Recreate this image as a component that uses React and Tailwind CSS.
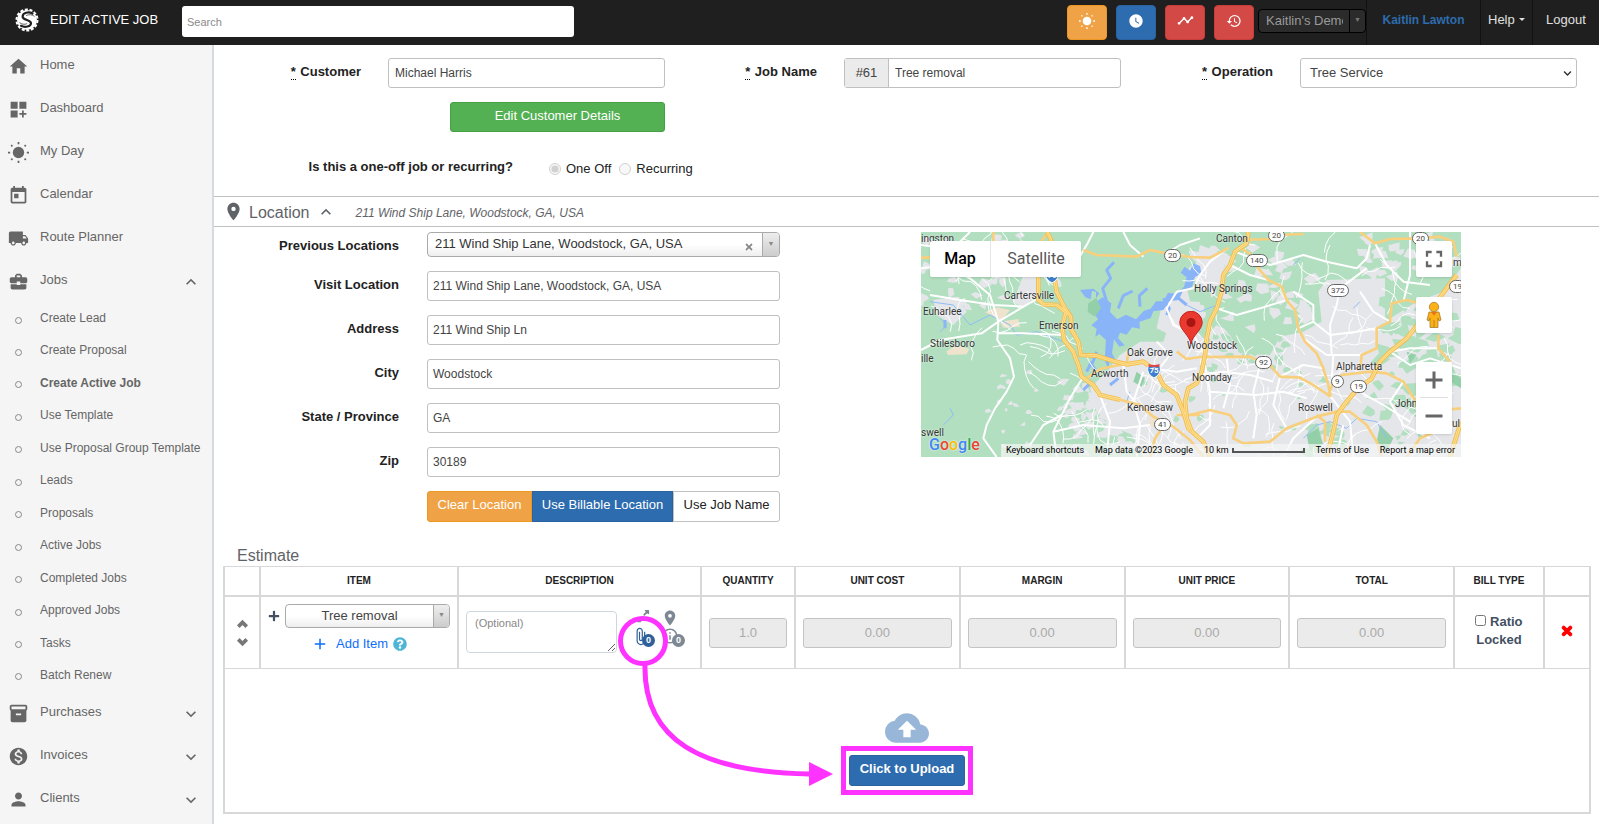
import React from 'react';
import {
  MdHome,
  MdDashboardCustomize,
  MdToday,
  MdLocalShipping,
  MdBusinessCenter,
  MdInventory2,
  MdMonetizationOn,
  MdPerson,
  MdExpandLess,
  MdExpandMore,
  MdPlace,
  MdBackup,
  MdTimeline,
  MdHistory,
  MdWatchLater,
  MdOutlineInfo,
  MdAttachFile,
  MdAdd,
  MdFullscreen
} from 'react-icons/md';
import { FaPlus, FaChevronDown, FaExpandAlt, FaTimes, FaQuestionCircle } from 'react-icons/fa';
import { Plus, Minus, ChevronUp, ChevronDown } from 'lucide-react';

const SunIcon = ({ size }) => (
  <svg width={size} height={size} viewBox="0 0 24 24" fill="currentColor" stroke="currentColor" aria-hidden="true">
    <circle cx="12" cy="12" r="6.500" stroke="none" />
    <g strokeWidth="2">
      <path d="M12 0v2.500M12 21.500v2.500M0 12h2.500M21.500 12h2.500M3.600 3.600l1.500 1.500M18.900 18.900l1.500 1.500M3.600 20.400l1.500-1.500M18.900 5.100l1.500-1.500" />
    </g>
  </svg>
);

const NAV_TOP = [
  { label: 'Home', icon: MdHome },
  { label: 'Dashboard', icon: MdDashboardCustomize },
  { label: 'My Day', icon: SunIcon },
  { label: 'Calendar', icon: MdToday },
  { label: 'Route Planner', icon: MdLocalShipping },
  { label: 'Jobs', icon: MdBusinessCenter, arrow: MdExpandLess }
];

const JOB_LINKS = [
  'Create Lead',
  'Create Proposal',
  'Create Active Job',
  'Use Template',
  'Use Proposal Group Template',
  'Leads',
  'Proposals',
  'Active Jobs',
  'Completed Jobs',
  'Approved Jobs',
  'Tasks',
  'Batch Renew'
];

const NAV_BOTTOM = [
  { label: 'Purchases', icon: MdInventory2, arrow: MdExpandMore },
  { label: 'Invoices', icon: MdMonetizationOn, arrow: MdExpandMore },
  { label: 'Clients', icon: MdPerson, arrow: MdExpandMore }
];

const LOCATION_FIELDS = [
  { id: 'visit', label: 'Visit Location', value: '211 Wind Ship Lane, Woodstock, GA, USA' },
  { id: 'address', label: 'Address', value: '211 Wind Ship Ln' },
  { id: 'city', label: 'City', value: 'Woodstock' },
  { id: 'state', label: 'State / Province', value: 'GA' },
  { id: 'zip', label: 'Zip', value: '30189' }
];

const Logo = () => (
  <svg width="24" height="24" viewBox="0 0 24 24" aria-hidden="true">
    <circle cx="12" cy="12" r="10" fill="#fff" />
    <circle cx="12" cy="12" r="10.500" fill="none" stroke="#fff" strokeWidth="2" strokeDasharray="3 1.700" />
    <path
      d="M17.500 5.500C14 3.200 7.500 4.600 7.600 8.600c.1 3.600 8.600 3.200 8.400 6.600-.2 3.400-6 4.600-10 2.600"
      fill="none"
      stroke="#1f1f1f"
      strokeWidth="2.200"
      strokeLinecap="round"
    />
    <path d="M19.500 8.500c-2-2-6.500-2.400-8.600-.6M4.600 14.600c1.600 1.600 5.200 2.300 7.600 1" fill="none" stroke="#1f1f1f" strokeWidth=".7" />
  </svg>
);

const Header = () => (
  <header className="flex h-[45px] items-center bg-[#1f1f1f] text-[#e0e0e0]">
    <div className="flex w-[182px] shrink-0 items-center gap-[11px] pb-1.5 pl-[15px]">
      <Logo />
      <h1 className="text-[13px] whitespace-nowrap text-white">EDIT ACTIVE JOB</h1>
    </div>
    <input
      type="text"
      aria-label="Search"
      placeholder="Search"
      className="mb-0.5 h-[31px] w-[392px] rounded-[3px] bg-white px-[5px] text-[11px] text-gray-700 placeholder:text-[#8a8a8a]"
    />
    <div className="ml-auto flex shrink-0 items-center gap-[9px] pr-1 text-white">
      <button aria-label="My day" className="flex h-[35px] w-10 items-center justify-center rounded border border-[#ec971f] bg-[#f0a346] pb-1">
        <SunIcon size={16} />
      </button>
      <button aria-label="Time" className="flex h-[35px] w-10 items-center justify-center rounded border border-[#2a63a0] bg-[#2d6cae] pb-1">
        <MdWatchLater size={16} />
      </button>
      <button aria-label="Activity" className="flex h-[35px] w-10 items-center justify-center rounded border border-[#c93c38] bg-[#d34945] pb-1">
        <MdTimeline size={17} />
      </button>
      <button aria-label="History" className="flex h-[35px] w-10 items-center justify-center rounded border border-[#c93c38] bg-[#d34945] pb-1">
        <MdHistory size={16} />
      </button>
    </div>
    <div className="mb-1 flex h-6 w-[108px] shrink-0 rounded border border-black bg-[#2b2b2b]">
      <select aria-label="Company" className="min-w-0 flex-1 appearance-none overflow-hidden pr-1.5 pl-[7px] text-[13px] text-[#9a9a9a]">
        <option>Kaitlin&apos;s Demo</option>
      </select>
      <span className="flex w-4 items-center justify-center border-l border-black text-[7px] text-[#777]">▼</span>
    </div>
    <nav className="flex h-full shrink-0 items-stretch text-[13px]">
      <a href="#account" className="flex w-[114px] items-center justify-center border-l border-[#111] pb-1.5 text-[12px] font-bold text-[#2d6cae]">
        Kaitlin Lawton
      </a>
      <a href="#help" className="flex w-[52px] items-center gap-1 border-l border-[#111] pb-1.5 pl-[7px]">
        Help
        <span className="border-x-3 border-t-3 border-x-transparent border-t-[#e0e0e0]" />
      </a>
      <a href="#logout" className="flex w-[67px] items-center justify-center border-l border-[#111] pb-1.5">
        Logout
      </a>
    </nav>
  </header>
);

const NavItem = ({ label, icon: Icon, arrow: Arrow }) => (
  <li>
    <a href={`#${label}`} className="flex h-[43px] items-center pr-[11px]">
      <span className="flex w-10 items-center pl-2">
        <Icon size={21} />
      </span>
      <span className="flex-1 pb-1">{label}</span>
      {Arrow && <Arrow size={20} />}
    </a>
  </li>
);

const Sidebar = () => (
  <aside className="w-[214px] shrink-0 border-r-2 border-[#d5dbe0] bg-[#f5f5f5] text-[13px] text-[#666]">
    <ul>
      {NAV_TOP.map((item) => (
        <NavItem key={item.label} {...item} />
      ))}
    </ul>
    <ul className="flex min-h-[389px] flex-col justify-between">
      {JOB_LINKS.map((label) => (
        <li key={label}>
          <a href={`#${label}`} className="flex h-8 items-center whitespace-nowrap">
            <span className="w-10 shrink-0 pt-0.5 pl-[15px]">
              <span className="block size-[7px] rounded-full border border-[#888]" />
            </span>
            <span className={label === 'Create Active Job' ? 'pb-0.5 text-[12px] font-bold' : 'pb-0.5 text-[12px]'}>{label}</span>
          </a>
        </li>
      ))}
    </ul>
    <ul>
      {NAV_BOTTOM.map((item) => (
        <NavItem key={item.label} {...item} />
      ))}
    </ul>
  </aside>
);

const Required = () => (
  <abbr title="required" className="mr-px border-b border-dotted border-black no-underline">
    *
  </abbr>
);

const JobDetails = () => (
  <section className="grid grid-cols-3 pt-[13px] pr-[9px] pb-4 pl-2 text-[13px] text-[#222]">
    <div className="pr-[13px]">
      <div className="flex items-center gap-[27px]">
        <label htmlFor="customer" className="w-[139px] pb-0.5 text-right text-[13px] font-bold">
          <Required /> Customer
        </label>
        <input
          id="customer"
          defaultValue="Michael Harris"
          className="h-[30px] min-w-0 flex-1 rounded-[3px] border border-[#c0c0c0] px-1.5 text-[12px] text-[#444]"
        />
      </div>
      <button className="mt-3.5 ml-auto block h-[30px] w-[215px] rounded-[3px] border border-[#46a046] bg-[#53b053] pb-0.5 text-white">
        Edit Customer Details
      </button>
      <fieldset className="mt-[21px] flex items-center">
        <legend className="float-left w-[291px] text-right font-bold">Is this a one-off job or recurring?</legend>
        <div className="flex h-[27px] flex-1 items-center gap-2 pt-1 pl-9">
          <label className="flex items-center gap-[5px] whitespace-nowrap">
            <input type="radio" name="kind" defaultChecked disabled className="size-3" />
            One Off
          </label>
          <label className="flex items-center gap-[5px] whitespace-nowrap">
            <input type="radio" name="kind" disabled className="size-3" />
            Recurring
          </label>
        </div>
      </fieldset>
    </div>
    <div className="pr-[13px]">
      <div className="flex items-center gap-[27px]">
        <label htmlFor="job" className="w-[139px] pb-0.5 text-right text-[13px] font-bold">
          <Required /> Job Name
        </label>
        <div className="flex h-[30px] min-w-0 flex-1 rounded-[3px] border border-[#c0c0c0]">
          <span className="flex w-11 items-center justify-center border-r border-[#c0c0c0] bg-[#ebebeb] text-[#444]">#61</span>
          <input id="job" defaultValue="Tree removal" className="min-w-0 flex-1 px-1.5 text-[12px] text-[#444]" />
        </div>
      </div>
    </div>
    <div className="pr-[13px]">
      <div className="flex items-center gap-[27px]">
        <label htmlFor="operation" className="w-[139px] pb-0.5 text-right text-[13px] font-bold">
          <Required /> Operation
        </label>
        <div className="grid h-[30px] min-w-0 flex-1 grid-cols-[1fr_auto] items-center rounded-[3px] border border-[#c0c0c0] pr-1">
          <select id="operation" className="h-full appearance-none pl-[9px] text-[#444]">
            <option>Tree Service</option>
          </select>
          <FaChevronDown size={9} color="#333" />
        </div>
      </div>
    </div>
  </section>
);

// Map artwork is drawn at three units per screen pixel
const HIGHWAYS = [
  'M410 21Q440 60 432 150L440 200 462 245 482 275 485 315 505 350 512 390 560 392 610 408 650 418 700 410 740 440 760 480 800 510 820 560 835 610 880 650 900 696',
  'M385 150V225L402 238 440 240 468 262 456 305 462 345 490 380 505 420 515 455 552 482 570 510 630 524',
  'M1015 21L1010 55 975 80 960 120 940 150 935 200 920 250 900 290 890 340 885 390 875 440 860 475 835 490 825 530 830 580 845 620',
  'M1640 150L1580 230 1530 290 1490 340 1440 380 1410 410 1385 460 1340 495 1310 530 1280 570 1270 620 1250 696',
  'M1620 696L1653 590'
];

const MAIN_ROADS = [
  'M33 98H60M250 21V60M415 21L385 60V150',
  'M520 75L560 90 680 95 720 75 770 85 840 96 900 98 935 80 955 68',
  'M1000 45L1080 42 1100 30 1180 27',
  'M995 70L1025 90 1045 130 1075 165 1115 185 1130 225 1155 255 1165 310 1185 350 1220 385 1240 430 1255 480 1262 515',
  'M800 380L830 402 870 396 1020 395 1080 420 1110 455 1170 458 1210 480 1262 515',
  'M1350 21L1395 55 1440 42 1530 40 1590 35 1630 50 1640 95',
  'M1530 235L1490 225 1445 235 1440 290 1400 310 1400 370 1355 390 1350 435',
  'M1255 510L1270 470 1295 450 1380 440 1430 445 1480 470 1505 510 1540 560 1653 550',
  'M840 570L900 555 960 570 980 600 970 640 1000 655 1080 650 1130 610 1220 575 1280 560 1320 560 1370 600 1400 650 1415 696',
  'M1220 570L1245 590 1245 650M1585 330V370L1620 410',
  'M530 460L570 432 650 415 655 385',
  'M630 524L690 540 730 575 790 605 840 645 880 696M870 570H800M770 590L735 640 720 696',
  'M1490 696L1530 640 1600 610'
];

const MINOR_ROADS = [
  'M33 375L90 345 215 325 265 290 340 245 385 220M265 290L262 345 300 400 312 455 290 500 255 550 230 600 220 640 260 696',
  'M33 130L110 120 180 160 240 210 265 290M60 210L150 225 250 240 340 245M110 120L140 60 180 21M33 60L150 75 220 100',
  'M265 325L340 325 460 330M520 455L480 520 455 570 430 620 440 696M455 570L400 600 360 660M430 620L520 600 640 610 720 600',
  'M850 190L800 200 770 250 790 300 850 330 885 390M550 21L530 60 500 110M640 21L660 60 700 95M770 85L810 60 870 40',
  'M955 68L900 110 870 150 850 190M960 120L1020 150 1075 165M920 250L980 270 1050 250 1130 225M1165 310L1210 290 1210 240 1150 200',
  'M975 80L1080 120 1180 90 1250 110 1340 130 1370 100 1380 60M1280 696L1300 600M1265 390L1260 300 1280 240 1290 190 1370 130',
  'M1500 21L1500 150 1480 230M1395 55L1430 120 1480 170 1560 180M1350 200L1390 260 1440 290M1210 290L1260 330 1340 320 1400 310',
  'M885 420L900 500 900 600 860 640M950 400L960 480 940 550M1050 420L1030 500 1040 570 1030 640M900 500L1040 510 1120 500 1190 520',
  'M1110 455L1090 540 1130 610M1240 430L1180 420 1110 455M1262 515L1320 590 1330 696M1120 696L1150 640 1220 575',
  'M860 450L940 440 1020 450 1090 470M1480 470L1440 530 1480 600 1560 640M1340 495L1420 540 1500 590M1440 380L1500 420 1560 400 1653 430',
  'M640 420L650 500 700 560M700 440L670 530 690 600 680 696M570 510L600 590 590 696M720 430L800 440 860 430M740 350L780 390 740 440',
  'M1270 390L1265 470M1180 340L1250 390 1350 390M1585 370L1500 370 1440 380'
];

const RIVERS = [
  'M60 230L130 240 180 300 240 270 300 300 320 330 380 320 460 350',
  'M90 280L110 300 90 320M100 600L130 570 120 550M830 240L870 260 920 240',
  'M1180 640L1220 600 1260 590 1310 610 1340 580 1400 590 1430 640M1480 410L1510 420',
  'M660 500L650 530M1150 120L1170 100M1330 250L1350 230'
];

const randomizer = (seed) => {
  let s = seed;
  return () => {
    s = (s * 16807) % 2147483647;
    return s / 2147483647;
  };
};

// Small land parcels spread over the given box
const parcels = (seed, count, x, y, w, h, size) => {
  const next = randomizer(seed);
  return Array.from({ length: count }, () => {
    const px = x + next() * w;
    const py = y + next() * h;
    const corners = [0, 1, 2, 3, 4].map((i) => {
      const r = size * (0.3 + next() * 0.9);
      const a = (i / 5) * Math.PI * 2 + next() * 0.7;
      return `${Math.round(px + Math.cos(a) * r)},${Math.round(py + Math.sin(a) * r * 0.8)}`;
    });
    return corners.join(' ');
  });
};

// Winding local streets spread over the given box
const streets = (seed, count, x, y, w, h) => {
  const next = randomizer(seed);
  return Array.from({ length: count }, () => {
    let px = x + next() * w;
    let py = y + next() * h;
    let a = next() * Math.PI * 2;
    let d = `M${Math.round(px)} ${Math.round(py)}`;
    for (let i = 0; i < 5; i += 1) {
      a += (next() - 0.5) * 1.4;
      px += Math.cos(a) * 22;
      py += Math.sin(a) * 22;
      d += `L${Math.round(px)} ${Math.round(py)}`;
    }
    return d;
  });
};

const GREY_PARCELS = [
  ...parcels(1117, 60, 450, 470, 250, 220, 20),
  ...parcels(2903, 32, 33, 21, 450, 230, 19),
  ...parcels(4129, 50, 840, 60, 370, 260, 24),
  ...parcels(5303, 20, 220, 400, 260, 290, 12),
  ...parcels(6701, 30, 1340, 30, 300, 130, 22)
];

const GREEN_PARCELS = [
  ...parcels(1709, 46, 1420, 170, 230, 260, 30),
  ...parcels(7307, 30, 880, 330, 260, 110, 16),
  ...parcels(8311, 26, 700, 440, 950, 250, 13),
  ...parcels(9719, 22, 1380, 400, 260, 180, 26),
  ...parcels(10103, 12, 1180, 600, 130, 90, 24)
];

const STREETS = [
  ...streets(3301, 55, 850, 380, 780, 300),
  ...streets(4507, 45, 870, 60, 780, 330),
  ...streets(5701, 40, 440, 440, 420, 240),
  ...streets(6907, 30, 40, 30, 420, 400)
];

const MAP_LABELS = [
  { text: 'ingston', x: 0, y: 0 },
  { text: 'Cartersville', x: 83, y: 57 },
  { text: 'Euharlee', x: 2, y: 73 },
  { text: 'Emerson', x: 118, y: 87 },
  { text: 'Stilesboro', x: 9, y: 105 },
  { text: 'ille', x: 0, y: 120 },
  { text: 'Oak Grove', x: 206, y: 114 },
  { text: 'Acworth', x: 170, y: 135 },
  { text: 'Kennesaw', x: 206, y: 169 },
  { text: 'swell', x: 0, y: 194 },
  { text: 'Canton', x: 295, y: 0 },
  { text: 'Holly Springs', x: 273, y: 50 },
  { text: 'Woodstock', x: 266, y: 107 },
  { text: 'Noonday', x: 271, y: 139 },
  { text: 'Alpharetta', x: 415, y: 128 },
  { text: 'Roswell', x: 377, y: 169 },
  { text: 'Johns Creek', x: 474, y: 165 },
  { text: 'm', x: 532, y: 24 },
  { text: 'ul', x: 531, y: 185 }
];

const ROUTE_SHIELDS = [
  { text: '20', x: 243, y: 17 },
  { text: '20', x: 347, y: -3 },
  { text: '20', x: 491, y: 0 },
  { text: '140', x: 325, y: 22 },
  { text: '372', x: 406, y: 52 },
  { text: '92', x: 334, y: 124 },
  { text: '9', x: 410, y: 143 },
  { text: '19', x: 429, y: 148 },
  { text: '41', x: 233, y: 186 },
  { text: '19', x: 528, y: 48 }
];

const MapArt = () => (
  <svg className="absolute inset-0 size-full" viewBox="33 21 1620 675" preserveAspectRatio="xMidYMid slice" aria-hidden="true">
    <rect x="33" y="21" width="1620" height="675" fill="#e5e6ea" />
    <path
      fill="#b2dfc0"
      d="M33 21H1653V130L1600 200 1520 230 1425 290V160L1250 165 1225 200 1235 290 1180 320 1110 335 1080 390 990 385 960 330 920 300 880 340 840 300 810 250 780 290 760 350 690 350 630 390 590 440 540 490 560 560 620 610 690 640 720 696H33Z"
    />
    <path fill="#e5e6ea" d="M330 40L385 90 390 200 340 250 310 230 340 150ZM70 225L140 215 170 260 130 300 80 270ZM870 60L950 90 930 180 870 200 850 150ZM760 220L830 190 860 300 800 340 740 310ZM590 440L700 430 760 520 820 600 850 696H700L660 620 600 560Z" />
    {GREY_PARCELS.map((points) => (
      <polygon key={points} points={points} fill="#e5e6ea" />
    ))}
    {GREEN_PARCELS.map((points) => (
      <polygon key={points} points={points} fill="#b2dfc0" />
    ))}
    <path fill="#93cfa9" d="M680 440l25 20-10 25-25-15ZM1190 630l35-20 15 50-40 20ZM1410 600l40 40-20 40-30-30ZM1490 380l30 10-20 25ZM1620 440l33 20v30l-30-20Z" />
    <path fill="#efe3cd" d="M225 262L260 247 300 255 275 285ZM270 290L325 282 330 305 280 308ZM108 380L140 360 178 372 170 388 115 390ZM720 575l30 5-5 30-28-8Z" />
    <path
      fill="#8ab4f8"
      d="M510 195l16 22 16 6 4-26 12 4 0 30 20-14 26 18-4 26 22 22 26-14 30 14 24-26 20-6 16-22 22 0 14-26 26 4 22-22 8-28-18-14 12-18 16 12 10-22 20 8 4 22-20 12-8 28-26 10-14 30-28 4-18 26-30 4-8 20-34 12 2 20-24-4-16 22-20-6-6 16 20 22-16 4-16-22-6 42 14 26-22-4-2 28-12-30 4-60-20-18-12 8 4-24-16-10 20-18-12-20 18-16-14-24 12-18-18-14Z"
    />
    <path fill="#93cfa9" d="M535 235l24-16 14 30-18 26-22-14Z" />
    <path
      fill="none"
      stroke="#8ab4f8"
      strokeWidth="9"
      strokeLinejoin="bevel"
      d="M590 230L578 190 602 160 590 135 612 112M625 250L640 212 668 198M690 245L688 212 712 190M560 380L545 420 560 440M545 410L530 440M760 220L778 250 770 270M800 215L830 240M545 470L520 495M600 480L625 460M105 285V310"
    />
    <g fill="none" strokeLinejoin="round">
      {RIVERS.map((d) => (
        <path key={d} d={d} stroke="#8fbdf5" strokeWidth="3" />
      ))}
      {STREETS.map((d) => (
        <path key={d} d={d} stroke="#fff" strokeWidth="3" />
      ))}
      {MINOR_ROADS.map((d) => (
        <path key={d} d={d} stroke="#fff" strokeWidth="6" />
      ))}
      {MAIN_ROADS.map((d) => (
        <path key={d} d={d} stroke="#f8cf7c" strokeWidth="8" />
      ))}
      {HIGHWAYS.map((d) => (
        <path key={d} d={d} stroke="#f3bd4f" strokeWidth="14" />
      ))}
      {HIGHWAYS.map((d) => (
        <path key={d} d={d} stroke="#fde293" strokeWidth="8" />
      ))}
      {HIGHWAYS.map((d) => (
        <path key={d} d={d} stroke="#f3bd4f" strokeWidth="2" />
      ))}
    </g>
  </svg>
);

const Interstate = ({ className }) => (
  <span className={className}>
    <svg width="14" height="15" viewBox="0 0 14 15" className="absolute inset-0" aria-hidden="true">
      <path d="M1 3q6 2 12 0 2 8-6 12Q-1 11 1 3Z" fill="#3f7fd0" stroke="#fff" />
      <path d="M1.500 1q5.500 2 11 0v3h-11Z" fill="#d9484a" />
    </svg>
    <span className="relative block text-center text-[8px] leading-4 font-bold text-white">75</span>
  </span>
);

const LocationMap = () => (
  <div className="relative h-[225px] w-[540px] shrink-0 overflow-hidden font-['Roboto',sans-serif]">
    <MapArt />
    {MAP_LABELS.map(({ text, x, y }) => (
      <span
        key={text}
        className="absolute text-[10px] leading-[14px] whitespace-nowrap text-[#333] [text-shadow:0_0_2px_#fff]"
        style={{ left: x, top: y }}
      >
        {text}
      </span>
    ))}
    {ROUTE_SHIELDS.map(({ text, x, y }) => (
      <span
        key={`${text}-${x}`}
        className="absolute rounded-full border border-[#666] bg-white px-[3px] text-[8px] leading-[11px] text-[#444]"
        style={{ left: x, top: y }}
      >
        {text}
      </span>
    ))}
    <Interstate className="absolute top-9 left-[124px] h-4 w-3.5" />
    <Interstate className="absolute top-[131px] left-[226px] h-4 w-3.5" />
    <svg className="absolute top-[79px] left-[258px]" width="24" height="34" viewBox="0 0 24 34" aria-hidden="true">
      <path d="M12 33C10.500 24 .8 19 .8 11.500a11.200 11.200 0 0 1 22.400 0C23.200 19 13.500 24 12 33Z" fill="#ea3a30" stroke="#c5221f" />
      <circle cx="12" cy="11.500" r="4.500" fill="#a81513" />
    </svg>

    <div className="absolute top-[9px] left-[9px] flex h-9 rounded-[2px] bg-white text-[16px] shadow">
      <button className="w-[61px] border-r border-[#e6e6e6] font-medium text-black">Map</button>
      <button className="w-[90px] text-[#565656]">Satellite</button>
    </div>
    <div className="absolute top-[9px] right-[9px] flex w-9 flex-col text-[#666]">
      <button aria-label="Full screen" className="flex h-9 items-center justify-center rounded-[2px] bg-white shadow">
        <MdFullscreen size={28} />
      </button>
      <button aria-label="Street view" className="mt-5 flex h-9 items-center justify-center rounded-[2px] bg-white shadow">
        <svg width="16" height="28" viewBox="0 0 16 28" aria-hidden="true">
          <path d="M3 11h10l2 8-2 1-1-3v9.500H4V17l-1 3-2-1Z" fill="#fbb117" stroke="#9c7420" strokeWidth=".7" />
          <circle cx="8" cy="6" r="4.700" fill="#fbb117" stroke="#9c7420" strokeWidth=".7" />
          <path d="M5 11h6l-3 3.500Z" fill="#e8711c" />
          <path d="M8 19v7.500" stroke="#9c7420" strokeWidth=".7" />
        </svg>
      </button>
      <div className="mt-[29px] rounded-[2px] bg-white px-1 shadow">
        <button aria-label="Zoom in" className="flex h-9 w-full items-center justify-center border-b border-[#e0e0e0]">
          <Plus size={24} strokeWidth={3} strokeLinecap="square" />
        </button>
        <button aria-label="Zoom out" className="flex h-9 w-full items-center justify-center">
          <Minus size={24} strokeWidth={3} strokeLinecap="square" />
        </button>
      </div>
    </div>

    <span className="absolute bottom-0.5 left-2 text-[16px] leading-5 font-medium [text-shadow:0_0_2px_#fff]">
      <span className="text-[#4285f4]">G</span>
      <span className="text-[#ea4335]">o</span>
      <span className="text-[#fbbc04]">o</span>
      <span className="text-[#4285f4]">g</span>
      <span className="text-[#34a853]">l</span>
      <span className="text-[#ea4335]">e</span>
    </span>
    <div className="absolute right-0 bottom-0 flex h-[13px] w-[460px] items-center justify-between bg-[#f5f5f5]/70 pr-1.5 pl-[5px] text-[9px] whitespace-nowrap text-black">
      <a href="#shortcuts">Keyboard shortcuts</a>
      <span>Map data ©2023 Google</span>
      <span className="flex items-center gap-[3px]">
        10 km
        <span className="block h-[5px] w-[73px] border-x-2 border-b-2 border-[#555]" />
      </span>
      <a href="#terms">Terms of Use</a>
      <a href="#report">Report a map error</a>
    </div>
  </div>
);

const LocationSection = () => (
  <section>
    <div className="flex h-[31px] items-center border-y border-[#c0c0c0] pl-[9px] text-[#5f6368]">
      <MdPlace size={21} />
      <h2 className="pt-0.5 pl-[5px] text-[16px]">Location</h2>
      <MdExpandLess size={20} className="ml-1.5" />
      <em className="ml-5 pt-[3px] text-[12px]">211 Wind Ship Lane, Woodstock, GA, USA</em>
    </div>
    <div className="flex pt-[5px]">
      <div className="w-[566px] shrink-0 text-[13px]">
        <div className="mb-3.5 flex items-center">
          <label htmlFor="previous" className="w-[213px] pt-0.5 pr-7 text-right font-bold text-[#222]">
            Previous Locations
          </label>
          <div className="flex h-[25px] flex-1 items-stretch overflow-hidden rounded border border-[#aaa] bg-gradient-to-b from-white via-white to-[#eee]">
            <select id="previous" className="flex-1 appearance-none pb-0.5 pl-[7px] text-[13px] text-[#333]">
              <option>211 Wind Ship Lane, Woodstock, GA, USA</option>
            </select>
            <button aria-label="Clear previous location" className="px-2 pt-1 text-[#888]">
              <FaTimes size={10} />
            </button>
            <span className="flex w-[17px] items-center justify-center border-l border-[#aaa] bg-gradient-to-b from-[#eee] to-[#ccc] text-[7px] text-[#888]">
              ▼
            </span>
          </div>
        </div>
        {LOCATION_FIELDS.map(({ id, label, value }) => (
          <div key={id} className="mb-3.5 flex items-center">
            <label htmlFor={id} className="w-[213px] pr-7 pb-0.5 text-right font-bold text-[#222]">
              {label}
            </label>
            <input
              id={id}
              defaultValue={value}
              className="h-[30px] min-w-0 flex-1 rounded-[3px] border border-[#c0c0c0] px-[5px] text-[12px] text-[#444]"
            />
          </div>
        ))}
        <div className="ml-[213px] flex h-[31px] text-[13px]">
          <button className="w-[105px] rounded-l-[3px] border border-[#ec971f] bg-[#f0a346] pb-1 whitespace-nowrap text-white">
            Clear Location
          </button>
          <button className="flex-1 border border-[#2a63a0] bg-[#2d6cae] pb-1 whitespace-nowrap text-white">Use Billable Location</button>
          <button className="w-[107px] rounded-r-[3px] border border-[#c0c0c0] pb-1 whitespace-nowrap text-[#222]">Use Job Name</button>
        </div>
      </div>
      <div className="flex flex-1 justify-end pr-[138px]">
        <LocationMap />
      </div>
    </div>
  </section>
);

const HEAD_CELL = 'border-r-2 border-b-2 border-[#d8d8d8] pb-0.5 text-[10px] font-bold text-[#222]';
const BODY_CELL = 'border-r-2 border-b border-[#d8d8d8] p-0';

const AmountCell = ({ label, value }) => (
  <td className={`${BODY_CELL} px-[7px]`}>
    <input
      aria-label={label}
      defaultValue={value}
      disabled
      className="block h-[30px] w-full rounded-[3px] border border-[#c4c4c4] bg-[#ebebeb] text-center text-[13px] text-[#aaa]"
    />
  </td>
);

const EstimateTable = () => (
  <table className="w-full table-fixed border-separate border-spacing-0">
    <colgroup>
      <col className="w-9" />
      <col className="w-[198px]" />
      <col className="w-[243px]" />
      <col className="w-[94px]" />
      <col />
      <col />
      <col />
      <col />
      <col className="w-[90px]" />
      <col className="w-11" />
    </colgroup>
    <thead>
      <tr className="h-[30px]">
        <th className={HEAD_CELL} />
        <th className={HEAD_CELL}>ITEM</th>
        <th className={HEAD_CELL}>DESCRIPTION</th>
        <th className={HEAD_CELL}>QUANTITY</th>
        <th className={HEAD_CELL}>UNIT COST</th>
        <th className={HEAD_CELL}>MARGIN</th>
        <th className={HEAD_CELL}>UNIT PRICE</th>
        <th className={HEAD_CELL}>TOTAL</th>
        <th className={HEAD_CELL}>BILL TYPE</th>
        <th className="border-b-2 border-[#d8d8d8]" />
      </tr>
    </thead>
    <tbody>
      <tr className="h-[72px]">
        <td className={BODY_CELL}>
          <div className="flex flex-col items-center text-[#777]">
            <button aria-label="Move up">
              <ChevronUp size={17} strokeWidth={5} strokeLinecap="butt" strokeLinejoin="miter" />
            </button>
            <button aria-label="Move down">
              <ChevronDown size={17} strokeWidth={5} strokeLinecap="butt" strokeLinejoin="miter" />
            </button>
          </div>
        </td>
        <td className={BODY_CELL}>
          <div className="flex items-center gap-[5px] pr-[7px] pl-[7px]">
            <button aria-label="Expand item" className="text-[#435062]">
              <FaPlus size={12} />
            </button>
            <div className="flex h-6 flex-1 overflow-hidden rounded border border-[#aaa] bg-gradient-to-b from-white via-white to-[#eee]">
              <select aria-label="Item" className="flex-1 appearance-none text-center text-[13px] text-[#444]">
                <option>Tree removal</option>
              </select>
              <span className="flex w-4 items-center justify-center border-l border-[#aaa] bg-gradient-to-b from-[#eee] to-[#ccc] text-[7px] text-[#888]">
                ▼
              </span>
            </div>
          </div>
          <div className="mt-1.5 mb-2 flex h-5 items-center justify-center gap-[5px] text-[13px] text-[#0d6efd]">
            <button className="flex items-center gap-[7px]">
              <MdAdd size={18} /> Add Item
            </button>
            <FaQuestionCircle size={14} color="#4db6d8" />
          </div>
        </td>
        <td className={BODY_CELL}>
          <div className="flex items-start pb-1 pl-[7px]">
            <textarea
              aria-label="Description"
              placeholder="(Optional)"
              className="mt-0.5 h-[42px] w-[151px] rounded border border-[#d0d6e0] px-2 py-[3px] text-[11px] placeholder:text-[#888]"
            />
            <div className="ml-3.5 grid grid-cols-2 gap-x-1.5 text-[#7e8894]">
              <button aria-label="Resize" className="flex h-[18px] w-6 justify-center">
                <FaExpandAlt size={14} />
              </button>
              <button aria-label="Place" className="flex h-[18px] w-6 justify-start">
                <MdPlace size={18} />
              </button>
              <button aria-label="Attachments" className="relative flex h-[22px] w-6 text-[#2f6099]">
                <MdAttachFile size={19} />
                <span className="absolute top-[7px] left-[11px] size-[13px] rounded-full bg-[#2f6099] text-center text-[9px] leading-[13px] font-bold text-white">
                  0
                </span>
              </button>
              <button aria-label="Notes" className="relative flex h-[22px] w-6">
                <MdOutlineInfo size={18} />
                <span className="absolute top-[7px] left-[11px] size-[13px] rounded-full bg-[#7e8894] text-center text-[9px] leading-[13px] font-bold text-white">
                  0
                </span>
              </button>
            </div>
          </div>
        </td>
        <AmountCell label="Quantity" value="1.0" />
        <AmountCell label="Unit cost" value="0.00" />
        <AmountCell label="Margin" value="0.00" />
        <AmountCell label="Unit price" value="0.00" />
        <AmountCell label="Total" value="0.00" />
        <td className={`${BODY_CELL} text-center`}>
          <label className="block px-2 pb-1 text-[13px] leading-[18px] font-bold text-[#435062]">
            <input type="checkbox" className="size-[11px]" /> Ratio Locked
          </label>
        </td>
        <td className="border-b border-[#d8d8d8] text-center">
          <button aria-label="Delete row" className="pb-1 text-[#f00]">
            <FaTimes size={14} className="mx-auto" stroke="currentColor" strokeWidth={40} />
          </button>
        </td>
      </tr>
    </tbody>
  </table>
);

const Estimate = () => (
  <section className="mt-6 pr-2 pl-[9px]">
    <h2 className="pl-3.5 text-[16px] leading-5 text-[#5f6368]">Estimate</h2>
    <div className="relative border-2 border-t border-[#d8d8d8]">
      <EstimateTable />
      <div className="flex flex-col items-center pt-[37px] pb-[17px]">
        <MdBackup size={44} color="#98b7d8" />
        <div className="-mt-1 border-5 border-[#ff33ff] px-[3px] py-1">
          <button className="h-[31px] w-[116px] rounded-[3px] border border-[#2a63a0] bg-[#2d6cae] pb-1 text-[13px] font-bold text-white">
            Click to Upload
          </button>
        </div>
      </div>
      {/* Callout from the attachment button to the upload button */}
      <svg
        className="pointer-events-none absolute top-0 left-0"
        width="620"
        height="245"
        viewBox="225 567 620 245"
        fill="none"
        stroke="#ff33ff"
        strokeWidth="5"
        aria-hidden="true"
      >
        <circle cx="643" cy="641" r="22.500" />
        <path d="M645 664C643 740 700 772 810 774" />
        <path d="M809 762L833 774 809 786Z" fill="#ff33ff" stroke="none" />
      </svg>
    </div>
  </section>
);

const App = () => (
  <div className="min-h-screen bg-white font-['Liberation_Sans',Arial,sans-serif]">
    <Header />
    <div className="flex">
      <Sidebar />
      <main className="min-w-0 flex-1 pb-2.5">
        <JobDetails />
        <LocationSection />
        <Estimate />
      </main>
    </div>
  </div>
);

export default App;
